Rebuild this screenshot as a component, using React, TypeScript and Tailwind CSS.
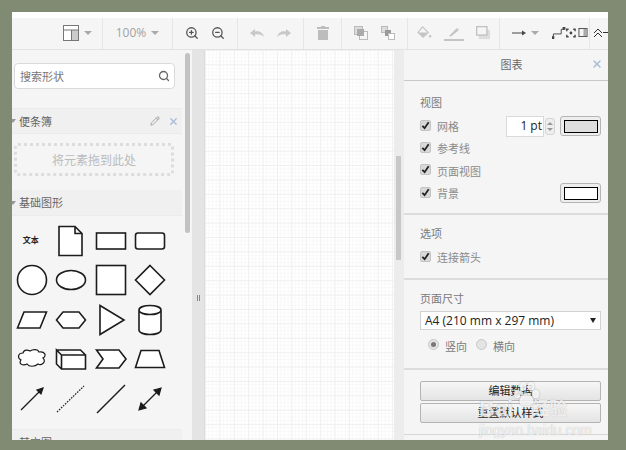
import { Search, Pencil, X, ZoomIn, ZoomOut } from 'lucide-react';
import type { ReactNode } from 'react';

const font = 'font-["Liberation_Sans","Noto_Sans_CJK_SC",sans-serif]';
const latin = 'font-["Open_Sans","Noto_Sans_CJK_SC",sans-serif]';

function Caret() {
  return <span className="ml-[5px] h-0 w-0 border-x-[4px] border-t-[4px] border-x-transparent border-t-[#aaaaaa]" />;
}

function Sep() {
  return <div className="-mb-[2px] w-px shrink-0 self-stretch bg-[#e6e6e6]" />;
}

function Check({ label, grow }: { label: string; grow?: boolean }) {
  return (
    <div className={`flex h-[22.4px] items-center ${grow ? 'flex-1' : ''}`}>
      <span className="-mt-[2px] flex h-[11px] w-[11px] items-center justify-center rounded-[2px] border border-[#c4c4c4] bg-[#d8d8d8]">
        <svg viewBox="0 0 10 10" className="h-[9px] w-[9px]">
          <path d="M1.5 5.5 L4 8 L8.5 1.5" fill="none" stroke="#222" strokeWidth="2" />
        </svg>
      </span>
      <span className="ml-[6px] mt-[2px] text-[11px] text-[#8a8a8a]">{label}</span>
    </div>
  );
}

function Swatch({ color }: { color: string }) {
  return (
    <div className="flex h-[20px] w-[41px] items-center justify-center rounded-[3px] border border-[#b5b5b5] bg-[#eeeeee]">
      <div className={`h-[13px] w-[34px] border border-black ${color}`} />
    </div>
  );
}

function Section({ title, children, pb }: { title: string; children: ReactNode; pb: string }) {
  return (
    <div className={`border-b-2 border-[#dcdcdc] pl-[16px] pr-[7px] ${pb}`}>
      <div className="text-[11px] leading-[14px] text-[#7a7a7a]">{title}</div>
      {children}
    </div>
  );
}

function Shape({ children, thin }: { children: ReactNode; thin?: boolean }) {
  return (
    <div className="flex h-[39.5px] w-[39.5px] items-center justify-center">
      <svg viewBox="0 0 36 36" className="h-[36px] w-[36px]" fill="#ffffff" stroke="#1c1c1c" strokeWidth={thin ? 1.2 : 1.6}>
        {children}
      </svg>
    </div>
  );
}

function SideCaret() {
  return <span className="-ml-[2px] h-0 w-0 border-x-[3px] border-t-[4px] border-x-transparent border-t-[#999999]" />;
}

export default function App() {
  return (
    <div className={`h-[450px] w-[626px] overflow-hidden bg-[#818b74] pl-[12px] pt-[12px] ${font}`}>
      <div className="relative flex h-[428px] w-[596px] flex-col overflow-hidden bg-white">
        <div className="h-[6px] shrink-0 bg-white" />

        {/* toolbar */}
        <div className="flex h-[32px] shrink-0 items-center overflow-hidden border-b border-[#e2e2e2] bg-[#f5f5f5] pb-[2px]">
          <div className="flex w-[90px] shrink-0 items-center justify-end pr-[10px]">
            <svg viewBox="0 0 16 16" className="h-[16px] w-[16px]" fill="none" stroke="#777" strokeWidth="1">
              <rect x="0.5" y="0.5" width="15" height="15" fill="#fff" />
              <rect x="9" y="5" width="6" height="10" fill="#ccc" stroke="none" />
              <path d="M0.5 5 H15.5 M8.5 5 V15" />
            </svg>
            <Caret />
          </div>
          <Sep />
          <div className={`flex w-[69px] shrink-0 items-center justify-center text-[12px] text-[#a3a3a3] ${latin}`}>
            100%
            <Caret />
          </div>
          <Sep />
          <div className="flex w-[64px] shrink-0 items-center justify-center gap-[12px] text-[#555555]">
            <ZoomIn size={14} strokeWidth={2.2} />
            <ZoomOut size={14} strokeWidth={2.2} />
          </div>
          <Sep />
          <div className="flex w-[65px] shrink-0 items-center justify-center gap-[13px]">
            <svg viewBox="0 0 14 10" className="h-[10px] w-[14px]" fill="#c8c8c8">
              <path d="M0 5 L5 1 V3.5 C9 2.5 13 4.5 14 9 C11.5 6.5 8.5 6 5 6.5 V9 Z" />
            </svg>
            <svg viewBox="0 0 14 10" className="h-[10px] w-[14px]" fill="#c8c8c8">
              <path d="M14 5 L9 1 V3.5 C5 2.5 1 4.5 0 9 C2.5 6.5 5.5 6 9 6.5 V9 Z" />
            </svg>
          </div>
          <Sep />
          <div className="flex w-[37px] shrink-0 items-center justify-center">
            <svg viewBox="0 0 12 14" className="h-[14px] w-[12px]" fill="#bdbdbd">
              <rect x="0" y="1" width="12" height="2" />
              <rect x="4" y="0" width="4" height="2" />
              <rect x="1" y="4" width="10" height="10" />
            </svg>
          </div>
          <Sep />
          <div className="flex w-[65px] shrink-0 items-center justify-center gap-[13px]">
            <svg viewBox="0 0 14 14" className="h-[14px] w-[14px]" fill="none" stroke="#bbb">
              <rect x="0.5" y="0.5" width="8" height="8" fill="#ddd" />
              <rect x="5.5" y="5.5" width="8" height="8" />
              <rect x="3" y="3" width="7" height="7" fill="#aaa" stroke="none" />
            </svg>
            <svg viewBox="0 0 14 14" className="h-[14px] w-[14px]" fill="none" stroke="#bbb">
              <rect x="0.5" y="0.5" width="6" height="6" fill="#ddd" />
              <rect x="4" y="4" width="6" height="6" fill="#999" stroke="none" />
              <rect x="7.5" y="7.5" width="6" height="6" fill="#fff" />
            </svg>
          </div>
          <Sep />
          <div className="flex w-[91px] shrink-0 items-center justify-center gap-[12px]">
            <svg viewBox="0 0 16 16" className="h-[15px] w-[15px]" fill="#c4c4c4">
              <path d="M6 2 L12 8 L6.5 13 L1 8 Z" fill="none" stroke="#c4c4c4" strokeWidth="1.2" />
              <path d="M2 8 H11.5 L6.5 13 Z" />
              <circle cx="14" cy="12" r="1.3" />
            </svg>
            <svg viewBox="0 0 20 16" className="h-[16px] w-[20px]" fill="#c4c4c4">
              <path d="M5 11 L13 3 L15 5 L7 11.5 Z" />
              <rect x="0" y="14" width="20" height="2" />
            </svg>
            <svg viewBox="0 0 15 15" className="h-[14px] w-[14px]" fill="none">
              <rect x="3" y="4" width="12" height="10" fill="#dddddd" />
              <rect x="0.7" y="0.7" width="11" height="9" fill="#f5f5f5" stroke="#c0c0c0" strokeWidth="1.4" />
            </svg>
          </div>
          <Sep />
          <div className="flex w-[89px] shrink-0 items-center pl-[12px]">
            <svg viewBox="0 0 14 8" className="h-[8px] w-[14px] shrink-0" fill="#444">
              <path d="M0 4 H11" stroke="#444" />
              <path d="M10 1.5 L14 4 L10 6.5 Z" />
            </svg>
            <Caret />
            <svg viewBox="0 0 26 14" className="ml-[13px] h-[14px] w-[24px] shrink-0" fill="none" stroke="#444">
              <path d="M1.5 12 V8 H10 V3 H13" />
              <rect x="0" y="11" width="2" height="2" fill="#444" />
              <rect x="12" y="1" width="2" height="2" fill="#444" />
              <path d="M16 5 V3 H18 M23 3 H25 V5 M25 9 V11 H23 M18 11 H16 V9" strokeWidth="1.5" />
              <circle cx="20.5" cy="7" r="1.5" fill="#444" stroke="none" />
            </svg>
            <svg viewBox="0 0 10 10" className="ml-[2px] h-[9px] w-[10px] shrink-0" fill="none" stroke="#444">
              <rect x="0.5" y="0.5" width="9" height="9" />
              <rect x="5.5" y="1" width="3.5" height="8" fill="#aaa" stroke="none" />
            </svg>
          </div>
          <Sep />
          <svg viewBox="0 0 16 10" className="ml-[3px] h-[10px] w-[16px] shrink-0" fill="none" stroke="#333">
            <path d="M1 5 L5 1 L9 5 M1 9 L5 5 L9 9 M10 4.5 H16" />
          </svg>
        </div>

        {/* body */}
        <div className="flex min-h-0 flex-1">
          {/* shapes */}
          <div className="flex w-[170px] shrink-0 flex-col overflow-hidden bg-[#f5f5f5]">
            <div className="h-[58px] shrink-0 pl-[2px] pr-[7px] pt-[13px]">
              <div className="flex h-[26px] items-center justify-between rounded-[4px] border border-[#dadada] bg-white pl-[5px] pr-[4px]">
                <span className="mt-[2px] text-[11px] text-[#777777]">搜索形状</span>
                <Search size={12} strokeWidth={2.6} className="text-[#666666]" />
              </div>
            </div>
            <div className="flex h-[26px] shrink-0 items-center border-y border-[#ebebeb] bg-[#f0f0f0] pr-[3px]">
              <SideCaret />
              <span className="ml-[3px] mt-[2px] flex-1 text-[11px] text-[#666666]">便条簿</span>
              <Pencil size={10} className="text-[#999999]" />
              <X size={11} strokeWidth={3} className="ml-[8px] text-[#a9bdd6]" />
            </div>
            <div className="h-[56px] shrink-0 pl-[2px] pr-[8px] pt-[9px]">
              <div className="flex h-[33px] items-center justify-center rounded-[4px] border-[3px] border-dotted border-[#dddddd] pt-[2px] text-[12px] text-[#bbbbbb]">
                将元素拖到此处
              </div>
            </div>
            <div className="flex h-[26px] shrink-0 items-center border-b border-[#ebebeb] bg-[#f0f0f0]">
              <SideCaret />
              <span className="ml-[3px] mt-[2px] text-[11px] text-[#666666]">基础图形</span>
            </div>
            <div className="grid h-[213px] shrink-0 grid-cols-[repeat(4,39.5px)] content-start pt-[5px]">
              <div className="flex h-[39.5px] items-center justify-center pr-[2px] text-[8px] font-bold text-[#222222]">文本</div>
              <Shape><path d="M6 3.5 H22 L29 10.5 V32.5 H6 Z M22 3.5 V10.5 H29" /></Shape>
              <Shape><rect x="3.5" y="10" width="29" height="16" /></Shape>
              <Shape><rect x="3.5" y="10" width="29" height="16" rx="2.5" /></Shape>

              <Shape><circle cx="18" cy="18" r="14.5" /></Shape>
              <Shape><ellipse cx="18" cy="18" rx="14.5" ry="9.5" /></Shape>
              <Shape><rect x="3.5" y="3.5" width="29" height="29" /></Shape>
              <Shape><path d="M18 3.5 L32.5 18 L18 32.5 L3.5 18 Z" /></Shape>

              <Shape><path d="M10 10 H32.5 L26 26 H3.5 Z" /></Shape>
              <Shape><path d="M10 10 H26 L32.5 18 L26 26 H10 L3.5 18 Z" /></Shape>
              <Shape><path d="M7 3.5 L31 18 L7 32.5 Z" /></Shape>
              <Shape><path d="M7 8 V28 C7 34 29 34 29 28 V8 C29 2 7 2 7 8 C7 14 29 14 29 8" /></Shape>

              <Shape thin><path d="M9 12 C10 8 14 9 16 10 C19 8 24 8 25 11 C31 10 33 15 29 17 C33 21 27 25 24 23 C21 26 15 26 13 23 C9 25 4 23 7 19 C3 17 4 12 9 12 Z" /></Shape>
              <Shape><path d="M3.5 9 L8.5 14 H32.5 V28 H8.5 L3.5 23 Z M3.5 9 H27.5 L32.5 14 M8.5 14 V28" /></Shape>
              <Shape><path d="M3.5 9 H26 L33 18 L26 27 H3.5 L10 18 Z" /></Shape>
              <Shape><path d="M9 9.5 H27 L32.5 26.5 H3.5 Z" /></Shape>

              <Shape thin><path d="M7 29 L27 9" /><path d="M29 7 L27 13 L25 11 L23 9 Z" fill="#1c1c1c" /></Shape>
              <Shape thin><path d="M4 31 L31 5" strokeDasharray="1.6 1.2" /></Shape>
              <Shape thin><path d="M4 32 L32 4" strokeWidth="1.5" /></Shape>
              <Shape thin><path d="M9 27 L27 9" /><path d="M29 7 L27 14 L22 9 Z M7 29 L9 22 L14 27 Z" fill="#1c1c1c" /></Shape>
            </div>
            <div className="flex-1 border-t border-[#ebebeb] bg-[#f0f0f0] pl-[7px] pt-[5px] text-[11px] text-[#666666]">
              其它图
            </div>
          </div>

          {/* left scrollbar */}
          <div className="w-[10px] shrink-0 bg-[#f5f5f5] pl-[3px] pt-[3px]">
            <div className="h-[180px] w-[5px] rounded-[3px] bg-[#c2c2c2]" />
          </div>
          {/* gutter */}
          <div className="flex w-[13px] shrink-0 items-start justify-center border-r border-[#dcdcdc] bg-[#e4e4e4] pl-[1px] pt-[245px]">
            <div className="h-[6px] w-[3px] border-x border-[#888888]" />
          </div>

          {/* canvas */}
          <div className="min-w-0 flex-1 bg-white bg-[linear-gradient(#f0f0f0_1px,transparent_1px),linear-gradient(90deg,#f0f0f0_1px,transparent_1px),linear-gradient(#f8f8f8_1px,transparent_1px),linear-gradient(90deg,#f8f8f8_1px,transparent_1px)] bg-[size:14.4px_14.4px,14.4px_14.4px,3.6px_3.6px,3.6px_3.6px]" />

          {/* canvas scrollbar */}
          <div className="w-[10px] shrink-0 bg-[#ececec] pl-[2px] pt-[106px]">
            <div className="h-[104px] w-[5px] bg-[#c8c8c8]" />
          </div>

          {/* format panel */}
          <div className="flex w-[204px] shrink-0 flex-col overflow-hidden bg-[#f5f5f5] text-[#7a7a7a]">
            <div className="relative flex h-[31px] shrink-0 items-center justify-center border-b border-[#c8c8c8] pl-[11px] pt-[1px] text-[11px] text-[#666666]">
              图表
              <X size={12} strokeWidth={3} className="absolute right-[5px] top-[8px] text-[#a9bdd6]" />
            </div>
            <Section title="视图" pb="h-[134px] pt-[15px]">
              <div className="pt-[5px]">
                <div className="flex items-center">
                  <Check label="网格" grow />
                  <div className={`flex h-[21px] w-[38px] items-center justify-end border border-[#dadada] bg-white pr-[1px] text-[12px] text-[#222222] ${latin}`}>1 pt</div>
                  <div className="ml-[1px] mr-[5px] flex h-[17px] w-[10px] flex-col items-center justify-center gap-[3px] rounded-[3px] border border-[#d4d4d4] bg-[#eeeeee]">
                    <span className="h-0 w-0 border-x-[3px] border-b-[3px] border-x-transparent border-b-[#999999]" />
                    <span className="h-0 w-0 border-x-[3px] border-t-[3px] border-x-transparent border-t-[#999999]" />
                  </div>
                  <Swatch color="bg-[#dedede]" />
                </div>
                <Check label="参考线" />
                <Check label="页面视图" />
                <div className="flex items-center justify-between">
                  <Check label="背景" />
                  <Swatch color="bg-white" />
                </div>
              </div>
            </Section>
            <Section title="选项" pb="h-[65px] pt-[12px]">
              <div className="pt-[5px]">
                <Check label="连接箭头" />
              </div>
            </Section>
            <Section title="页面尺寸" pb="h-[90px] pt-[12px]">
              <div className={`mt-[5px] flex h-[19px] items-center justify-between border border-[#d2d2d2] bg-white pl-[4px] pr-[4px] text-[12px] text-[#222222] ${latin}`}>
                <span>A4 (210 mm x 297 mm)</span>
                <span className="h-0 w-0 border-x-[3px] border-t-[5px] border-x-transparent border-t-[#222222]" />
              </div>
              <div className="mt-[7px] flex h-[18px] items-center pl-[8px] text-[11px]">
                <span className="-mt-[3px] flex h-[11px] w-[11px] items-center justify-center rounded-full border border-[#c8c8c8] bg-[#e4e4e4]">
                  <span className="h-[5px] w-[5px] rounded-full bg-[#777777]" />
                </span>
                <span className="ml-[6px] mt-[2px]">竖向</span>
                <span className="-mt-[3px] ml-[9px] h-[11px] w-[11px] rounded-full border border-[#c8c8c8] bg-[#e4e4e4]" />
                <span className="ml-[6px] mt-[2px]">横向</span>
              </div>
            </Section>
            <div className="flex flex-col gap-[2px] pl-[16px] pr-[7px] pt-[11px] text-[11px] text-[#222222]">
              <div className="flex h-[20px] items-center justify-center rounded-[2px] border border-[#b4b4b4] bg-[linear-gradient(#f6f6f6,#e4e4e4)]">编辑数据</div>
              <div className="flex h-[20px] items-center justify-center rounded-[2px] border border-[#b4b4b4] bg-[linear-gradient(#f6f6f6,#e4e4e4)]">重置默认样式</div>
            </div>
            <div className="mt-[11px] border-t border-[#d6d6d6]" />
          </div>
        </div>

        {/* watermark */}
        <div className="pointer-events-none absolute left-[467px] top-[369px] flex w-[120px] flex-col text-white/80 [text-shadow:0_0_1px_rgba(0,0,0,0.3)]">
          <div className="flex h-[40px] items-end">
            <span className="text-[22px] font-bold leading-[24px]">Bai</span>
            <svg viewBox="0 0 24 24" className="mb-[14px] h-[26px] w-[26px] shrink-0 drop-shadow-[0_0_1px_rgba(0,0,0,0.3)]" fill="currentColor">
              <ellipse cx="4" cy="12" rx="3" ry="4" />
              <ellipse cx="9.5" cy="5" rx="3" ry="4" />
              <ellipse cx="16.5" cy="5" rx="3" ry="4" />
              <ellipse cx="21" cy="12" rx="3" ry="4" />
              <path d="M12.5 11 C16 11 19 16 19 19 C19 23 15 22 12.5 22 C10 22 6 23 6 19 C6 16 9 11 12.5 11 Z" />
            </svg>
            <span className="mb-[1px] -ml-[8px] text-[18px] font-bold leading-[22px]">经验</span>
          </div>
          <div className="mt-[1px] text-[14px] leading-[16px]">jingyan.baidu.com</div>
        </div>
      </div>
    </div>
  );
}
